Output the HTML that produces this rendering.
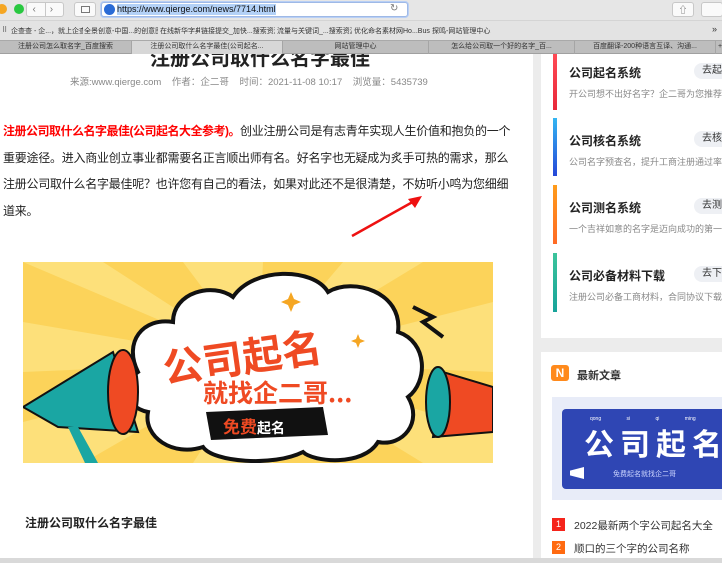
<!DOCTYPE html>
<html><head><meta charset="utf-8"><style>
*{margin:0;padding:0;box-sizing:border-box}
body{width:722px;height:563px;overflow:hidden;background:#fff;font-family:"Liberation Sans","Noto Sans CJK SC",sans-serif;position:relative;color:#333}
.a{position:absolute;white-space:nowrap}
#tb{left:0;top:0;width:722px;height:20px;background:#e6e6e6}
#bm{left:0;top:20px;width:722px;height:20px;background:#e3e3e3;border-top:1px solid #d4d4d4;font-size:7px;color:#333}
#bm span{overflow:hidden}
#tabs{left:0;top:40px;width:722px;height:14px;background:#bdbdbd;border-top:1px solid #a9a9a9;border-bottom:1px solid #a0a0a0}
.tab{position:absolute;top:0;height:13px;font-size:7px;color:#333;text-align:center;line-height:12px;border-right:1px solid #a5a5a5;overflow:hidden}
.card{position:absolute;background:#fff}
.item .bar{position:absolute;left:0;width:4px}
.t{font-size:12px;font-weight:bold;color:#222}
.d{font-size:9px;color:#888}
.btn{position:absolute;left:141px;width:40px;height:16px;border-radius:8px 0 0 8px;background:#eef0f4;font-size:10px;color:#333;line-height:16px;padding-left:8px}
.ln{position:absolute;left:3px;font-size:12px;color:#222;white-space:nowrap;line-height:16px;letter-spacing:-0.25px}
</style></head><body>
<div id="tb" class="a">
 <div class="a" style="left:-3px;top:4px;width:10px;height:10px;border-radius:50%;background:#f5a623"></div>
 <div class="a" style="left:14px;top:4px;width:10px;height:10px;border-radius:50%;background:#28c840"></div>
 <div class="a" style="left:26px;top:2px;width:38px;height:15px;border:1px solid #c8c8c8;border-radius:3px;background:#fafafa;font-size:10px;color:#777;line-height:13px">&nbsp;&nbsp;‹&nbsp;&nbsp;&nbsp;&nbsp;&nbsp;›</div>
 <div class="a" style="left:45px;top:2px;width:1px;height:15px;background:#c8c8c8"></div>
 <div class="a" style="left:74px;top:2px;width:22px;height:15px;border:1px solid #c8c8c8;border-radius:3px;background:#fafafa"><div class="a" style="left:6px;top:3px;width:9px;height:7px;border:1px solid #777"></div></div>
 <div class="a" style="left:101px;top:2px;width:307px;height:15px;border:1px solid #9fb9e6;border-radius:3px;background:#fff;box-shadow:0 0 0 1px #b8cff5">
  <div class="a" style="left:2px;top:1px;width:11px;height:11px;border-radius:50%;background:#2a6bd6"></div>
  <span class="a" style="left:15px;top:1px;font-size:9px;line-height:11px;background:#b3d1f7;color:#111">https://www.qierge.com/news/7714.html</span>
  <span class="a" style="left:288px;top:0;font-size:10px;color:#777">↻</span>
 </div>
 <div class="a" style="left:672px;top:2px;width:22px;height:15px;border:1px solid #c8c8c8;border-radius:3px;background:#fafafa;font-size:9px;text-align:center;color:#666">⇧</div>
 <div class="a" style="left:701px;top:2px;width:22px;height:15px;border:1px solid #c8c8c8;border-radius:3px;background:#fafafa"></div>
</div>
<div id="bm" class="a">
 <span class="a" style="left:2px;top:5px">⠿</span>
 <span class="a" style="left:11px;top:5px;width:72px">企查查 - 企...，就上企查查!</span>
 <span class="a" style="left:84px;top:5px;width:74px">全景创意-中国...的创意图片库</span>
 <span class="a" style="left:160px;top:5px;width:40px">在线新华字典</span>
 <span class="a" style="left:201px;top:5px;width:74px">链接提交_加快...搜索资源平台</span>
 <span class="a" style="left:277px;top:5px;width:75px">流量与关键词_...搜索资源平台</span>
 <span class="a" style="left:354px;top:5px;width:76px">优化命名素材网Ho...Business</span>
 <span class="a" style="left:432px;top:5px;width:64px">探鸣-网站管理中心</span>
 <span class="a" style="left:712px;top:3px;font-size:9px">»</span>
</div>
<div id="tabs" class="a">
 <div class="tab" style="left:0;width:132px">注册公司怎么取名字_百度搜索</div>
 <div class="tab" style="left:132px;width:151px;background:#d7d7d7">注册公司取什么名字最佳(公司起名...</div>
 <div class="tab" style="left:283px;width:146px">网站管理中心</div>
 <div class="tab" style="left:429px;width:146px">怎么给公司取一个好的名字_百...</div>
 <div class="tab" style="left:575px;width:141px">百度翻译-200种语言互译、沟通...</div>
 <div class="tab" style="left:716px;width:8px;border:none">+</div>
</div>
<!-- main -->
<div class="a" style="left:0;top:54px;width:533px;height:509px;background:#fff;overflow:hidden">
 <div class="a" style="left:150px;top:-12px;font-size:20px;color:#222;font-weight:bold">注册公司取什么名字最佳</div>
 <div class="a" style="left:70px;top:20px;font-size:9.5px;color:#888">来源:www.qierge.com&nbsp;&nbsp;&nbsp;&nbsp;作者：企二哥&nbsp;&nbsp;&nbsp;&nbsp;时间：2021-11-08 10:17&nbsp;&nbsp;&nbsp;&nbsp;浏览量：5435739</div>
 <div class="ln" style="top:69px"><b style="color:#f00;letter-spacing:-0.5px">注册公司取什么名字最佳(公司起名大全参考)。</b>创业注册公司是有志青年实现人生价值和抱负的一个</div>
 <div class="ln" style="top:96px">重要途径。进入商业创立事业都需要名正言顺出师有名。好名字也无疑成为炙手可热的需求，那么</div>
 <div class="ln" style="top:122px">注册公司取什么名字最佳呢？也许您有自己的看法，如果对此还不是很清楚，不妨听小鸣为您细细</div>
 <div class="ln" style="top:149px">道来。</div>
 <svg class="a" style="left:350px;top:140px" width="75" height="45"><line x1="2" y1="42" x2="68" y2="5" stroke="#e11" stroke-width="2.5"/><polygon points="72,2 58,5 65,14" fill="#e11"/></svg>
 <svg class="a" style="left:23px;top:208px" width="470" height="201" viewBox="0 0 470 201">
  <rect width="470" height="201" fill="#fcd35a"/>
  <g fill="#fde07a">
   <polygon points="235,100 0,0 80,0"/><polygon points="235,100 160,0 240,0"/><polygon points="235,100 320,0 400,0"/><polygon points="235,100 470,40 470,110"/><polygon points="235,100 470,170 470,201 400,201"/><polygon points="235,100 250,201 170,201"/><polygon points="235,100 60,201 0,201 0,160"/><polygon points="235,100 0,60 0,110"/>
  </g>
  <path d="M115,110 C100,80 120,55 150,60 C150,30 190,20 210,35 C230,5 290,5 305,30 C330,15 380,30 375,70 C405,80 405,120 385,135 C400,160 380,185 355,180 C340,205 290,200 280,190 C250,205 190,200 180,185 C150,195 120,175 125,150 C100,145 100,120 115,110Z" fill="#fff" stroke="#111" stroke-width="4"/>
  <text x="140" y="110" font-size="40" font-weight="bold" fill="#ef4a23" transform="rotate(-8 220 100)" font-family="Noto Sans CJK SC">公司起名</text>
  <text x="180" y="140" font-size="25" font-weight="bold" fill="#ef4a23" font-family="Noto Sans CJK SC">就找企二哥...</text>
  <polygon points="183,150 300,145 305,173 188,178" fill="#111"/>
  <text x="200" y="171" font-size="17" font-weight="bold" fill="#ef4a23" font-family="Noto Sans CJK SC">免费<tspan fill="#fff" font-size="14">起名</tspan></text>
  <polygon points="0,145 90,90 115,170 35,165" fill="#1aa6a3" stroke="#111" stroke-width="2"/>
  <ellipse cx="100" cy="130" rx="15" ry="42" fill="#ef4a23" stroke="#111" stroke-width="2"/>
  <polygon points="45,165 55,165 75,201 62,201" fill="#1aa6a3"/>
  <polygon points="470,125 420,110 410,175 470,170" fill="#ef4a23" stroke="#111" stroke-width="2"/>
  <ellipse cx="415" cy="140" rx="12" ry="35" fill="#1aa6a3" stroke="#111" stroke-width="2"/>
  <path d="M390,45 L410,55 L400,60 L420,75" stroke="#111" stroke-width="4" fill="none"/>
  <path d="M268,30 l3,7 7,3 -7,3 -3,7 -3,-7 -7,-3 7,-3z M335,72 l2,5 5,2 -5,2 -2,5 -2,-5 -5,-2 5,-2z" fill="#f5a623"/>
 </svg>
 <div class="a" style="left:25px;top:460px;font-size:12px;font-weight:bold;color:#222">注册公司取什么名字最佳</div>
</div>
<!-- gray gap -->
<div class="a" style="left:533px;top:54px;width:8px;height:509px;background:#ececec"></div>
<div class="a" style="left:541px;top:338px;width:181px;height:14px;background:#ececec"></div>
<div class="card" style="left:541px;top:54px;width:181px;height:284px">
 <div class="a item" style="left:12px;top:0;width:169px;height:56px"><div class="bar" style="top:0;height:56px;background:linear-gradient(#ff4a55,#e8283a)"></div><div class="a t" style="left:16px;top:10px">公司起名系统</div><div class="btn" style="top:9px">去起</div><div class="a d" style="left:16px;top:33px">开公司想不出好名字？企二哥为您推荐</div></div>
 <div class="a item" style="left:12px;top:64px;width:169px;height:58px"><div class="bar" style="top:0;height:58px;background:linear-gradient(#34b6f2,#2547d8)"></div><div class="a t" style="left:16px;top:14px">公司核名系统</div><div class="btn" style="top:13px">去核</div><div class="a d" style="left:16px;top:37px">公司名字预查名，提升工商注册通过率</div></div>
 <div class="a item" style="left:12px;top:131px;width:169px;height:59px"><div class="bar" style="top:0;height:59px;background:linear-gradient(#ff9c1a,#ff6a24)"></div><div class="a t" style="left:16px;top:14px">公司测名系统</div><div class="btn" style="top:13px">去测</div><div class="a d" style="left:16px;top:37px">一个吉祥如意的名字是迈向成功的第一步</div></div>
 <div class="a item" style="left:12px;top:199px;width:169px;height:59px"><div class="bar" style="top:0;height:59px;background:linear-gradient(#3cc49b,#17a39a)"></div><div class="a t" style="left:16px;top:14px">公司必备材料下载</div><div class="btn" style="top:13px">去下</div><div class="a d" style="left:16px;top:37px">注册公司必备工商材料，合同协议下载</div></div>
</div>
<div class="card" style="left:541px;top:352px;width:181px;height:211px">
 <div class="a" style="left:10px;top:13px;width:18px;height:16px;background:#ff8a1c;border-radius:3px;color:#fff;font-weight:bold;font-size:12px;text-align:center;line-height:16px">N</div>
 <div class="a" style="left:36px;top:15px;font-size:11px;color:#333;font-weight:bold">最新文章</div>
 <div class="a" style="left:11px;top:45px;width:170px;height:103px;background:#e8ecf8;overflow:hidden">
  <div class="a" style="left:10px;top:12px;width:170px;height:80px;background:#2f46b4;border-radius:4px"></div>
  <div class="a" style="left:38px;top:19px;font-size:5px;color:#fff;word-spacing:24px">qong si qi ming</div>
  <div class="a" style="left:32px;top:26px;font-size:30px;font-weight:bold;color:#fff;letter-spacing:6px;font-family:'Noto Sans CJK SC',sans-serif;line-height:38px">公司起名</div>
  <div class="a" style="left:61px;top:72px;font-size:7px;color:#cdd6ff">免费起名就找企二哥</div>
  <div class="a" style="left:18px;top:70px;width:14px;height:12px;background:#fff;clip-path:polygon(0 30%,100% 0,100% 100%,0 70%)"></div>
 </div>
 <div class="a" style="left:11px;top:166px;width:13px;height:13px;background:#f5241b;color:#fff;font-size:9px;text-align:center;line-height:13px">1</div>
 <div class="a" style="left:33px;top:166px;font-size:10.5px;color:#333">2022最新两个字公司起名大全</div>
 <div class="a" style="left:11px;top:189px;width:13px;height:13px;background:#ff6a10;color:#fff;font-size:9px;text-align:center;line-height:13px">2</div>
 <div class="a" style="left:33px;top:189px;font-size:10.5px;color:#333">顺口的三个字的公司名称</div>
</div>
<div class="a" style="left:0;top:558px;width:722px;height:5px;background:#d9d9d9"></div>
</body></html>
